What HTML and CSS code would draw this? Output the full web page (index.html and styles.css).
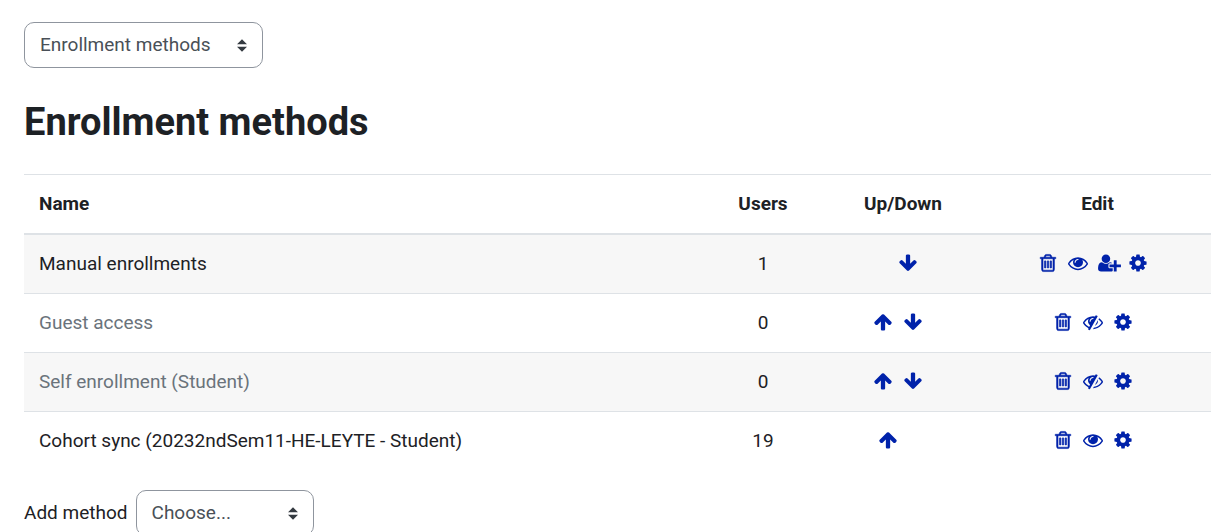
FILE: index.html
```
<!DOCTYPE html>
<html lang="en">
<head>
<meta charset="utf-8">
<title>Enrollment methods</title>
<link rel="stylesheet" href="styles.css">
</head>
<body>
<svg class="sprite" aria-hidden="true">
  <symbol id="sort" viewBox="0 0 4 5"><path d="M2 0L0 2h4zm0 5L0 3h4z"/></symbol>
  <symbol id="trash" viewBox="0 0 1792 1792"><path d="M704 736v576q0 14-9 23t-23 9h-64q-14 0-23-9t-9-23v-576q0-14 9-23t23-9h64q14 0 23 9t9 23zm256 0v576q0 14-9 23t-23 9h-64q-14 0-23-9t-9-23v-576q0-14 9-23t23-9h64q14 0 23 9t9 23zm256 0v576q0 14-9 23t-23 9h-64q-14 0-23-9t-9-23v-576q0-14 9-23t23-9h64q14 0 23 9t9 23zm128 724v-948h-896v948q0 22 7 40.5t14.5 27 10.5 8.5h832q3 0 10.5-8.5t14.5-27 7-40.5zm-672-1076h448l-48-117q-7-9-17-11h-317q-10 2-17 11zm928 32v64q0 14-9 23t-23 9h-96v948q0 83-47 143.5t-113 60.5h-832q-66 0-113-58.5t-47-141.5v-952h-96q-14 0-23-9t-9-23v-64q0-14 9-23t23-9h309l70-167q15-37 54-63t79-26h320q40 0 79 26t54 63l70 167h309q14 0 23 9t9 23z"/></symbol>
  <symbol id="eye" viewBox="0 0 1792 1792"><path d="M1664 960q-152-236-381-353 61 104 61 225 0 185-131.5 316.5t-316.5 131.5-316.5-131.5-131.5-316.5q0-121 61-225-229 117-381 353 133 205 333.5 326.5t434.5 121.5 434.5-121.5 333.5-326.5zm-720-384q0-20-14-34t-34-14q-125 0-214.5 89.5t-89.5 214.5q0 20 14 34t34 14 34-14 14-34q0-86 61-147t147-61q20 0 34-14t14-34zm848 384q0 34-20 69-140 230-376.5 368.5t-499.5 138.5-499.5-139-376.5-368q-20-35-20-69t20-69q140-229 376.5-368t499.5-139 499.5 139 376.5 368q20 35 20 69z"/></symbol>
  <symbol id="eye-slash" viewBox="0 0 1792 1792"><path d="M555 1335l78-141q-87-63-136-159t-49-203q0-121 61-225-229 117-381 353 167 258 427 375zm389-759q0-20-14-34t-34-14q-125 0-214.5 89.5t-89.5 214.5q0 20 14 34t34 14 34-14 14-34q0-86 61-147t147-61q20 0 34-14t14-34zm363-191q0 7-1 9-106 189-316 567t-315 566l-49 89q-10 16-28 16-12 0-134-70-16-10-16-28 0-12 44-87-143-65-263.5-173t-208.5-245q-20-31-20-69t20-69q153-235 380-371t496-136q89 0 180 17l54-97q10-16 28-16 5 0 18 6t31 15.5 33 18.5 31.5 18.5 19.5 11.5q16 10 16 27zm37 447q0 139-79 253.5t-209 164.5l280-502q8 45 8 84zm448 128q0 35-20 69-39 64-109 145-150 172-347.5 267t-419.5 95l74-132q212-18 392.5-137t301.5-307q-115-179-282-294l63-112q95 64 182.5 153t144.5 184q20 34 20 69z"/></symbol>
  <symbol id="user-plus" viewBox="0 0 2048 1792"><path d="M704 896q-159 0-271.5-112.5T320 512t112.5-271.5T704 128t271.5 112.5T1088 512 975.5 783.5 704 896zM1664 1024h352q13 0 22.5 9.5t9.5 22.5v192q0 13-9.5 22.5t-22.5 9.5h-352v352q0 13-9.5 22.5t-22.5 9.5h-192q-13 0-22.5-9.5t-9.5-22.5v-352h-352q-13 0-22.5-9.5t-9.5-22.5v-192q0-13 9.5-22.5t22.5-9.5h352V672q0-13 9.5-22.5t22.5-9.5h192q13 0 22.5 9.5t9.5 22.5v352zM928 1248q0 52 38 90t90 38h256v238q-68 50-171 50H267q-121 0-194-69T0 1405q0-53 3.5-103.5t14-109T44 1084t43-97.5 62-81 85.5-53.5T346 832q19 0 39 17 79 61 154.5 91.5T704 971t164.5-30.5T1023 849q20-17 39-17 132 0 217 96h-223q-52 0-90 38t-38 90v192z"/></symbol>
  <symbol id="cog" viewBox="0 0 1792 1792"><path d="M1152 896q0-106-75-181t-181-75-181 75-75 181 75 181 181 75 181-75 75-181zm512-109v222q0 12-8 23t-20 13l-185 28q-19 54-39 91 35 50 107 138 10 12 10 25t-9 23q-27 37-99 108t-94 71q-12 0-26-9l-138-108q-44 23-91 38-16 136-29 186-7 28-36 28h-222q-14 0-24.5-8.5t-11.5-21.5l-28-184q-49-16-90-37l-141 107q-10 9-25 9-14 0-25-11-126-114-165-168-7-10-7-23 0-12 8-23 15-21 51-66.5t54-70.5q-27-50-41-99l-183-27q-13-2-21-12.5t-8-23.5v-222q0-12 8-23t19-13l186-28q14-46 39-92-40-57-107-138-10-12-10-24 0-10 9-23 26-36 98.5-107.5t94.5-71.5q13 0 26 10l138 107q44-23 91-38 16-136 29-186 7-28 36-28h222q14 0 24.5 8.5t11.5 21.5l28 184q49 16 90 37l142-107q9-9 24-9 13 0 25 10 129 119 165 170 7 8 7 22 0 12-8 23-15 21-51 66.5t-54 70.5q26 50 41 98l183 28q13 2 21 12.5t8 23.5z"/></symbol>
  <symbol id="up" viewBox="0 0 1792 1792"><path d="M1675 971q0 51-37 90l-75 75q-38 38-91 38-54 0-90-38l-294-293v704q0 52-37.5 84.5t-90.5 32.5h-128q-53 0-90.5-32.5t-37.5-84.5v-704l-294 293q-36 38-90 38t-90-38l-75-75q-38-38-38-90 0-53 38-91l651-651q35-37 90-37 54 0 91 37l651 651q37 39 37 91z"/></symbol>
  <symbol id="down" viewBox="0 0 1792 1792"><path d="M1675 832q0 53-37 90l-651 652q-39 37-91 37-53 0-90-37l-651-652q-38-36-38-90 0-53 38-91l74-75q39-37 91-37 53 0 90 37l294 294v-704q0-52 38-90t90-38h128q52 0 90 38t38 90v704l294-294q37-37 90-37 52 0 91 37l75 75q37 39 37 91z"/></symbol>
</svg>
<main class="page">
  <div class="select-box">
    <select class="select select-page" aria-label="Participants navigation"><option>Enrollment methods</option></select>
    <svg class="select-icon"><use href="#sort"/></svg>
  </div>
  <h1 class="title">Enrollment methods</h1>
  <table class="methods">
    <colgroup><col class="col-name"><col class="col-users"><col class="col-move"><col class="col-edit"></colgroup>
    <thead>
      <tr><th class="name">Name</th><th>Users</th><th>Up/Down</th><th>Edit</th></tr>
    </thead>
    <tbody>
      <tr>
        <td class="name">Manual enrollments</td>
        <td>1</td>
        <td><div class="actions"><span class="spacer"></span><a class="action" href="#" aria-label="Down"><svg class="icon"><use href="#down"/></svg></a></div></td>
        <td><div class="actions">
          <a class="action" href="#" aria-label="Delete"><svg class="icon icon-heavy"><use href="#trash"/></svg></a>
          <a class="action" href="#" aria-label="Disable"><svg class="icon"><use href="#eye"/></svg></a>
          <a class="action" href="#" aria-label="Enroll users"><svg class="icon icon-wide"><use href="#user-plus"/></svg></a>
          <a class="action" href="#" aria-label="Edit"><svg class="icon"><use href="#cog"/></svg></a>
        </div></td>
      </tr>
      <tr>
        <td class="name dimmed">Guest access</td>
        <td>0</td>
        <td><div class="actions">
          <a class="action" href="#" aria-label="Up"><svg class="icon"><use href="#up"/></svg></a>
          <a class="action" href="#" aria-label="Down"><svg class="icon"><use href="#down"/></svg></a>
        </div></td>
        <td><div class="actions">
          <a class="action" href="#" aria-label="Delete"><svg class="icon icon-heavy"><use href="#trash"/></svg></a>
          <a class="action" href="#" aria-label="Enable"><svg class="icon"><use href="#eye-slash"/></svg></a>
          <a class="action" href="#" aria-label="Edit"><svg class="icon"><use href="#cog"/></svg></a>
        </div></td>
      </tr>
      <tr>
        <td class="name dimmed">Self enrollment (Student)</td>
        <td>0</td>
        <td><div class="actions">
          <a class="action" href="#" aria-label="Up"><svg class="icon"><use href="#up"/></svg></a>
          <a class="action" href="#" aria-label="Down"><svg class="icon"><use href="#down"/></svg></a>
        </div></td>
        <td><div class="actions">
          <a class="action" href="#" aria-label="Delete"><svg class="icon icon-heavy"><use href="#trash"/></svg></a>
          <a class="action" href="#" aria-label="Enable"><svg class="icon"><use href="#eye-slash"/></svg></a>
          <a class="action" href="#" aria-label="Edit"><svg class="icon"><use href="#cog"/></svg></a>
        </div></td>
      </tr>
      <tr>
        <td class="name">Cohort sync (20232ndSem11-HE-LEYTE - Student)</td>
        <td>19</td>
        <td><div class="actions"><a class="action" href="#" aria-label="Up"><svg class="icon"><use href="#up"/></svg></a><span class="spacer"></span></div></td>
        <td><div class="actions">
          <a class="action" href="#" aria-label="Delete"><svg class="icon icon-heavy"><use href="#trash"/></svg></a>
          <a class="action" href="#" aria-label="Disable"><svg class="icon"><use href="#eye"/></svg></a>
          <a class="action" href="#" aria-label="Edit"><svg class="icon"><use href="#cog"/></svg></a>
        </div></td>
      </tr>
    </tbody>
  </table>
  <div class="add-method">
    <label for="add">Add method</label>
    <div class="select-box">
      <select class="select select-add" id="add"><option>Choose...</option></select>
      <svg class="select-icon"><use href="#sort"/></svg>
    </div>
  </div>
</main>
</body>
</html>
```
FILE: styles.css
```
* {
  box-sizing: border-box;
}

body {
  margin: 0;
  background: #fff;
  color: #1d2125;
  font-family: Roboto, "Liberation Sans", sans-serif;
  font-size: 19px;
  line-height: 28px;
}

.sprite {
  display: none;
}

.page {
  display: flex;
  flex-direction: column;
  align-items: flex-start;
  padding: 22px 3px 20px 24px;
}

.select-box {
  position: relative;
}

.select {
  appearance: none;
  display: block;
  height: 46px;
  padding: 0 15px;
  border: 1px solid #8f959e;
  border-radius: 10px;
  background: #fff;
  color: #495057;
  font: inherit;
}

.select-page {
  width: 239px;
}

.select-add {
  width: 178px;
}

.select-icon {
  position: absolute;
  top: 17px;
  right: 16px;
  width: 10px;
  height: 13px;
  fill: #343a40;
  pointer-events: none;
}

.title {
  margin: 32px 0 30px;
  font-size: 38px;
  font-weight: 700;
  line-height: 44px;
}

.methods {
  width: 100%;
  border-spacing: 0;
  table-layout: fixed;
}

.col-users {
  width: 118px;
}

.col-move {
  width: 162px;
}

.col-edit {
  width: 227px;
}

.methods th,
.methods td {
  padding: 15px;
  border-top: 1px solid #dee2e6;
  text-align: center;
}

.methods th {
  border-bottom: 2px solid #dee2e6;
  font-weight: 700;
}

.methods .name {
  text-align: left;
}

.methods tbody tr:first-child td {
  border-top: 0;
}

.methods tbody tr:nth-child(odd) {
  background: #f7f7f7;
}

.methods .dimmed {
  color: #6a737b;
}

.actions {
  display: flex;
  justify-content: center;
  align-items: center;
  height: 28px;
  padding-bottom: 2px;
}

.action {
  display: flex;
  width: 20px;
  margin-right: 10px;
}

.spacer {
  width: 20px;
}

.icon {
  flex: none;
  width: 20px;
  height: 20px;
  fill: #0022aa;
}

.icon-wide {
  width: 23px;
}

.icon-heavy {
  stroke: #0022aa;
  stroke-width: 50;
}

.add-method {
  display: flex;
  align-items: center;
  gap: 8px;
  margin-top: 20px;
}
```
